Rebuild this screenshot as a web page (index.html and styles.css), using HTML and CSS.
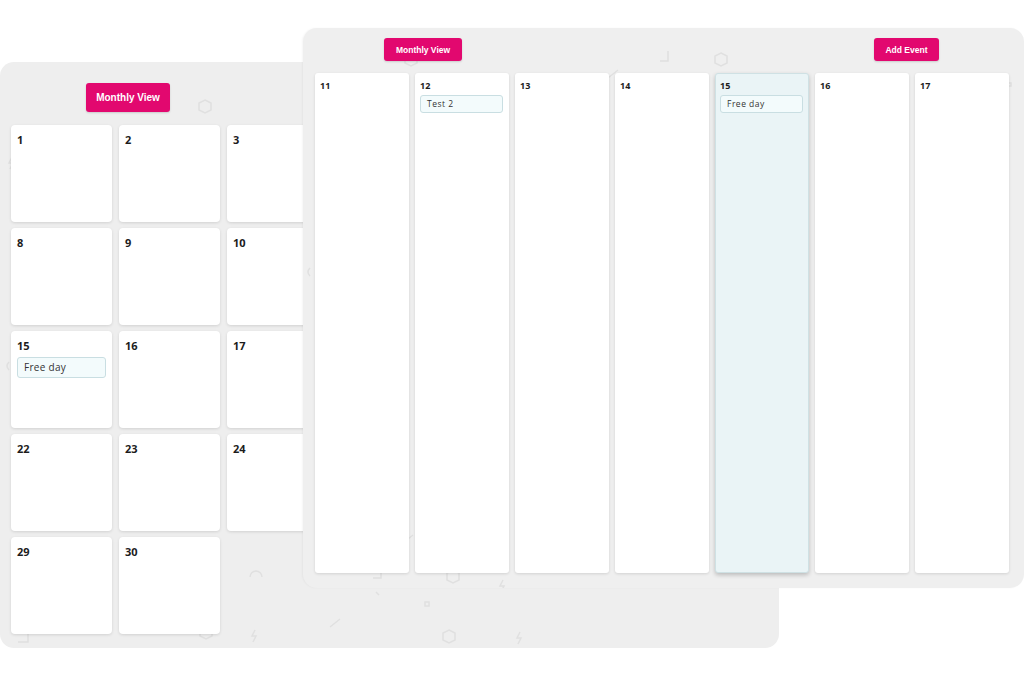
FILE: index.html
```html
<!DOCTYPE html>
<html>
<head>
  <title>Calendar Views</title>
  <link rel="stylesheet" href="styles.css">
</head>
<body>
  <div class="stage">

    <!-- monthly view (back window) -->
    <section class="panel panel-month">
      <svg class="deco" width="779" height="586" viewBox="0 0 779 586">
        <polygon points="205,38 211,41 211,48 205,51 199,48 199,41" />
        <path d="M12 95 l-3 6 h4 l-3 6" />
        <path d="M255 98 l-3 6 h4 l-3 6" />
        <rect x="56" y="130" width="5" height="5" />
        <path d="M9 300 q-4 4 0 8" />
        <path d="M250 515 a6 6 0 0 1 12 0" />
        <path d="M130 568 h8 v-10" />
        <polygon points="206,564 212,567 212,574 206,577 200,574 200,567" />
        <path d="M255 568 l-3 6 h4 l-3 6" />
        <polygon points="449,568 455,571 455,578 449,581 443,578 443,571" />
        <path d="M330 565 l10 -8" />
        <path d="M376 530 l3 3" />
        <path d="M18 580 h10 v-10" />
        <path d="M520 570 l-3 6 h4 l-3 6" />
        <rect x="425" y="540" width="4" height="4" />
      </svg>
      <div class="panel-head month-head">
        <button class="btn btn-lg">Monthly View</button>
      </div>
      <div class="month-grid">
        <div class="day"><span class="num">1</span></div>
        <div class="day"><span class="num">2</span></div>
        <div class="day"><span class="num">3</span></div>
        <div class="day"><span class="num">4</span></div>
        <div class="day"><span class="num">5</span></div>
        <div class="day"><span class="num">6</span></div>
        <div class="day"><span class="num">7</span></div>
        <div class="day"><span class="num">8</span></div>
        <div class="day"><span class="num">9</span></div>
        <div class="day"><span class="num">10</span></div>
        <div class="day"><span class="num">11</span></div>
        <div class="day"><span class="num">12</span></div>
        <div class="day"><span class="num">13</span></div>
        <div class="day"><span class="num">14</span></div>
        <div class="day">
          <span class="num">15</span>
          <div class="event">Free day</div>
        </div>
        <div class="day"><span class="num">16</span></div>
        <div class="day"><span class="num">17</span></div>
        <div class="day"><span class="num">18</span></div>
        <div class="day"><span class="num">19</span></div>
        <div class="day"><span class="num">20</span></div>
        <div class="day"><span class="num">21</span></div>
        <div class="day"><span class="num">22</span></div>
        <div class="day"><span class="num">23</span></div>
        <div class="day"><span class="num">24</span></div>
        <div class="day"><span class="num">25</span></div>
        <div class="day"><span class="num">26</span></div>
        <div class="day"><span class="num">27</span></div>
        <div class="day"><span class="num">28</span></div>
        <div class="day"><span class="num">29</span></div>
        <div class="day"><span class="num">30</span></div>
      </div>
    </section>

    <!-- weekly view (front window) -->
    <section class="panel panel-week">
      <svg class="deco" width="721" height="560" viewBox="0 0 721 560">
        <path d="M18 70 l-3 6 h4 l-3 6" />
        <polygon points="108,25 114,28 114,35 108,38 102,35 102,28" />
        <path d="M144 70 l-3 6 h4 l-3 6" />
        <path d="M305 50 l10 -8" />
        <polygon points="418,25 424,28 424,35 418,38 412,35 412,28" />
        <path d="M357 33 h8 v-10" />
        <path d="M495 70 l-3 6 h4 l-3 6" />
        <path d="M7 240 q-4 4 0 8" />
        <path d="M100 515 l10 -8" />
        <rect x="72" y="530" width="4" height="4" />
        <path d="M70 550 h8 v-10" />
        <polygon points="150,542 156,545 156,552 150,555 144,552 144,545" />
        <path d="M135 532 l3 3" />
        <path d="M200 552 l-3 6 h4 l-3 6" />
        <rect x="705" y="55" width="3" height="3" />
      </svg>
      <div class="panel-head week-head">
        <button class="btn btn-sm">Monthly View</button>
        <button class="btn btn-sm">Add Event</button>
      </div>
      <div class="week-row">
        <div class="col"><span class="num">11</span></div>
        <div class="col">
          <span class="num">12</span>
          <div class="event">Test 2</div>
        </div>
        <div class="col"><span class="num">13</span></div>
        <div class="col"><span class="num">14</span></div>
        <div class="col col-today">
          <span class="num">15</span>
          <div class="event">Free day</div>
        </div>
        <div class="col"><span class="num">16</span></div>
        <div class="col"><span class="num">17</span></div>
      </div>
    </section>

  </div>
</body>
</html>
```

FILE: styles.css
```css
/* calendar windows */
html, body {
  margin: 0;
  background: #ffffff;
  font-family: "Open Sans", "Noto Sans", sans-serif;
  color: #1c1c1c;
}
.stage {
  position: relative;
  width: 1024px;
  height: 698px;
  overflow: hidden;
}

.panel {
  position: absolute;
  box-sizing: border-box;
  border-radius: 14px;
  background: #eeeeee;
}
.panel .deco {
  position: absolute;
  left: 0;
  top: 0;
  fill: none;
  stroke: #e0e0e0;
  stroke-width: 1.5;
}
.panel-head,
.month-grid,
.week-row {
  position: relative;
}

.panel-month {
  left: 0;
  top: 62px;
  width: 779px;
  height: 586px;
  padding: 21px 12px 0 11px;
}
.panel-week {
  left: 303px;
  top: 28px;
  width: 721px;
  height: 560px;
  padding: 10px 15px 0 12px;
  background: #efefef;
  box-shadow: -1px 0 2px rgba(0, 0, 0, 0.04);
}

/* buttons */
.btn {
  border: none;
  border-radius: 3px;
  background: #e2086f;
  color: #ffffff;
  font-family: "Liberation Sans", Arial, sans-serif;
  font-weight: bold;
  cursor: pointer;
  box-shadow: 0 1px 2px rgba(0, 0, 0, 0.15);
  padding: 0;
}
.btn-lg {
  width: 84px;
  height: 29px;
  font-size: 10px;
}
.btn-sm {
  height: 23px;
  font-size: 8.5px;
}
.week-head .btn-sm:first-child { width: 78px; }
.week-head .btn-sm:last-child { width: 65px; }

.month-head {
  padding-left: 75px;
  height: 29px;
  margin-bottom: 13px;
}
.week-head {
  display: flex;
  justify-content: space-between;
  padding-left: 69px;
  padding-right: 70px;
  height: 23px;
  margin-bottom: 12px;
}

/* month grid */
.month-grid {
  display: grid;
  grid-template-columns: repeat(7, 101px);
  grid-auto-rows: 97px;
  column-gap: 7px;
  row-gap: 6px;
}
.day {
  background: #ffffff;
  border-radius: 4px;
  box-shadow: 0 1px 3px rgba(0, 0, 0, 0.12);
  padding: 8px 6px 0 6px;
}
.day .num {
  display: block;
  font-size: 11px;
  font-weight: 700;
  line-height: 14px;
  height: 14px;
}
.day .event {
  margin-top: 4px;
  height: 19px;
  line-height: 19px;
  padding: 0 6px;
  font-size: 10px;
  letter-spacing: 0.3px;
  color: #333333;
  background: #f3fbfc;
  border: 1px solid #c9dee2;
  border-radius: 3px;
}

/* week row */
.week-row {
  display: flex;
  gap: 6px;
}
.col {
  width: 94px;
  height: 500px;
  box-sizing: border-box;
  background: #ffffff;
  border-radius: 3px;
  box-shadow: 0 1px 3px rgba(0, 0, 0, 0.12);
  padding: 7px 6px 0 5px;
}
.col .num {
  display: block;
  font-size: 9px;
  font-weight: 700;
  line-height: 12px;
  height: 12px;
}
.col .event {
  margin-top: 3px;
  height: 16px;
  line-height: 16px;
  padding: 0 6px;
  font-size: 8.5px;
  letter-spacing: 0.5px;
  color: #333333;
  background: #f3fbfc;
  border: 1px solid #c9dee2;
  border-radius: 3px;
}
.col-today {
  background: #eaf4f6;
  border: 1px solid #cfe1e4;
  padding: 6px 5px 0 4px;
  box-shadow: 0 2px 4px rgba(0, 0, 0, 0.22);
}
```
